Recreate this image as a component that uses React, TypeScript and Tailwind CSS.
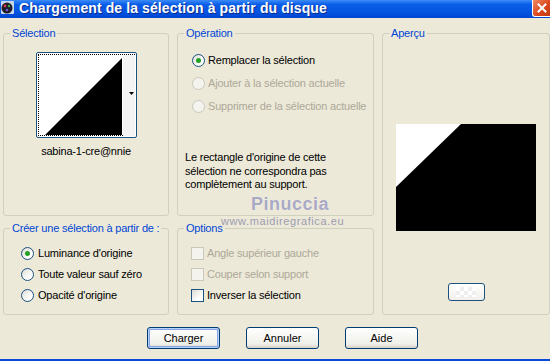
import React from 'react';

const FONT = "font-['Liberation_Sans',Arial,sans-serif]";

function Radio({ checked, disabled }: { checked?: boolean; disabled?: boolean }) {
  return (
    <span
      className={`w-[13px] h-[13px] rounded-full border shrink-0 flex items-center justify-center ${
        disabled
          ? 'border-[#CAC8BB] bg-[#F4F3EE]'
          : 'border-[#1C5180] bg-[linear-gradient(135deg,#DCDBD2,#FFFFFF_70%)]'
      }`}
    >
      {checked && <span className="w-[5px] h-[5px] rounded-full bg-[#21A121]" />}
    </span>
  );
}

function Check({ disabled }: { disabled?: boolean }) {
  return (
    <span
      className={`w-[13px] h-[13px] border shrink-0 ${
        disabled
          ? 'border-[#CAC8BB] bg-[#F4F3EE]'
          : 'border-[#1C5180] bg-[linear-gradient(135deg,#DCDBD2,#FFFFFF_70%)]'
      }`}
    />
  );
}

function Group({
  label,
  className,
  children,
}: {
  label: string;
  className?: string;
  children?: React.ReactNode;
}) {
  return (
    <fieldset className={`border border-[#D0D0BF] rounded-[3px] px-[6px] min-w-0 ${className ?? ''}`}>
      <legend className="px-[2px] text-[#0046D5] text-[11px] leading-[14px] whitespace-nowrap">{label}</legend>
      {children}
    </fieldset>
  );
}

function Button({ label, isDefault }: { label: string; isDefault?: boolean }) {
  return (
    <button
      className={`w-[73px] h-[22px] rounded-[3px] border border-[#003C74] text-[11px] text-black bg-[linear-gradient(to_bottom,#FFFFFF,#F0F0EA_80%,#D6D0C5)] ${
        isDefault ? 'shadow-[inset_0_0_0_1px_#B9D1FA,inset_0_0_0_2px_#85A6E6]' : ''
      }`}
    >
      {label}
    </button>
  );
}

export default function App() {
  return (
    <div
      className={`relative w-[550px] h-[361px] overflow-hidden bg-[#ECE9D8] flex flex-col border-b-2 border-[#0A49D8] ${FONT}`}
    >
      {/* Title bar */}
      <div className="h-[18px] shrink-0 flex items-center bg-[linear-gradient(to_bottom,#3C8CF8,#0A5DE8_25%,#0454E0_70%,#0045CF)]">
        <svg width="14" height="14" viewBox="0 0 14 14" className="ml-[1px] -mt-[3px] shrink-0">
          <rect x="0" y="0" width="13" height="13" rx="1" fill="#C9D7E8" />
          <circle cx="6" cy="7" r="5.5" fill="#1E1E2A" />
          <circle cx="4" cy="5" r="1.4" fill="#D8324A" />
          <circle cx="8" cy="5" r="1.2" fill="#3AB24A" />
          <circle cx="6" cy="9" r="1.3" fill="#6A5ADE" />
        </svg>
        <span className="ml-[4px] text-white font-bold text-[14px] leading-none tracking-[0.1px] whitespace-nowrap -mt-[2px] [text-shadow:1px_1px_0_#0A2A8A]">
          Chargement de la sélection à partir du disque
        </span>
        <div className="ml-auto w-[18px] h-[17px] -mt-[2px] rounded-bl-[3px] border-l border-b border-white bg-[linear-gradient(135deg,#F28A62,#D9441B_60%,#C23A12)] flex items-center justify-center">
          <svg width="10" height="10" viewBox="0 0 10 10">
            <path d="M1.5 1.5 L8.5 8.5 M8.5 1.5 L1.5 8.5" stroke="white" strokeWidth="2" strokeLinecap="square" />
          </svg>
        </div>
      </div>

      {/* Body */}
      <div className="grid grid-cols-[166px_197px_168px] grid-rows-[190px_94px] gap-x-[8px] gap-y-[5px] pl-[3px] mt-[8px] whitespace-nowrap tracking-[-0.2px]">
        <Group label="Sélection" className="flex flex-col items-center">
          <div className="mt-[12px] w-[101px] h-[86px] border border-[#1C5180] rounded-[2px] bg-white p-[1px]">
            <div className="relative w-full h-full border border-dotted border-black">
              <svg width="97" height="82" viewBox="0 0 97 82" className="block">
                <polygon points="6,80 83,3 83,80" fill="#000" />
                <rect x="84" y="0" width="12" height="81" fill="#F4F4F4" />
                <polygon points="90,37 95,37 92.5,40" fill="#000" />
              </svg>
            </div>
          </div>
          <div className="mt-[6px] text-[11px] leading-[14px] text-black">sabina-1-cre@nnie</div>
        </Group>

        <Group label="Opération" className="flex flex-col">
          <div className="mt-[9px] ml-[8px] flex flex-col text-[11px]">
            <div className="h-[23px] flex items-center gap-[3px] text-black">
              <Radio checked />
              <span>Remplacer la sélection</span>
            </div>
            <div className="h-[23px] flex items-center gap-[3px] text-[#ACA899]">
              <Radio disabled />
              <span>Ajouter à la sélection actuelle</span>
            </div>
            <div className="h-[23px] flex items-center gap-[3px] text-[#ACA899]">
              <Radio disabled />
              <span>Supprimer de la sélection actuelle</span>
            </div>
          </div>
          <p className="mt-[33px] ml-[1px] text-[11px] leading-[13.5px] text-black">
            Le rectangle d'origine de cette
            <br />
            sélection ne correspondra pas
            <br />
            complètement au support.
          </p>
        </Group>

        <Group label="Aperçu" className="row-span-2 flex flex-col items-center">
          <svg width="140" height="107" viewBox="0 0 140 107" className="mt-[84px] shrink-0">
            <rect width="140" height="107" fill="#FFFFFF" />
            <polygon points="65,0 140,0 140,107 0,107 0,63" fill="#000" />
          </svg>
          <div className="mt-[52px] w-[37px] h-[18px] rounded-[3px] border border-[#1C5180] bg-[linear-gradient(to_bottom,#FFFFFF,#F0EFEA)] flex items-center justify-center">
            <div className="w-[20px] h-[10px] bg-[conic-gradient(#EEEEEE_25%,#FFFFFF_0_50%,#EEEEEE_0_75%,#FFFFFF_0)] bg-[length:8px_8px]" />
          </div>
        </Group>

        <Group label="Créer une sélection à partir de :" className="flex flex-col">
          <div className="mt-[8px] ml-[11px] flex flex-col text-[11px] text-black">
            <div className="h-[21px] flex items-center gap-[4px]">
              <Radio checked />
              <span>Luminance d'origine</span>
            </div>
            <div className="h-[21px] flex items-center gap-[4px]">
              <Radio />
              <span>Toute valeur sauf zéro</span>
            </div>
            <div className="h-[21px] flex items-center gap-[4px]">
              <Radio />
              <span>Opacité d'origine</span>
            </div>
          </div>
        </Group>

        <Group label="Options" className="flex flex-col">
          <div className="mt-[8px] ml-[7px] flex flex-col text-[11px]">
            <div className="h-[21px] flex items-center gap-[3px] text-[#ACA899]">
              <Check disabled />
              <span>Angle supérieur gauche</span>
            </div>
            <div className="h-[21px] flex items-center gap-[3px] text-[#ACA899]">
              <Check disabled />
              <span>Couper selon support</span>
            </div>
            <div className="h-[21px] flex items-center gap-[3px] text-black">
              <Check />
              <span>Inverser la sélection</span>
            </div>
          </div>
        </Group>
      </div>

      {/* Buttons */}
      <div className="mt-[12px] pl-[147px] flex gap-[26px]">
        <Button label="Charger" isDefault />
        <Button label="Annuler" />
        <Button label="Aide" />
      </div>

      {/* Watermark */}
      <div className="absolute left-[251px] top-[195px] text-[18px] font-bold leading-none tracking-[0.5px] text-[#A9A9C4] [text-shadow:0_0_1px_#FFFFFF] pointer-events-none">
        Pinuccia
      </div>
      <div className="absolute left-[221px] top-[216px] text-[11px] leading-none tracking-[0.6px] text-[#9C9CB2] pointer-events-none">
        www.maidiregrafica.eu
      </div>
    </div>
  );
}
